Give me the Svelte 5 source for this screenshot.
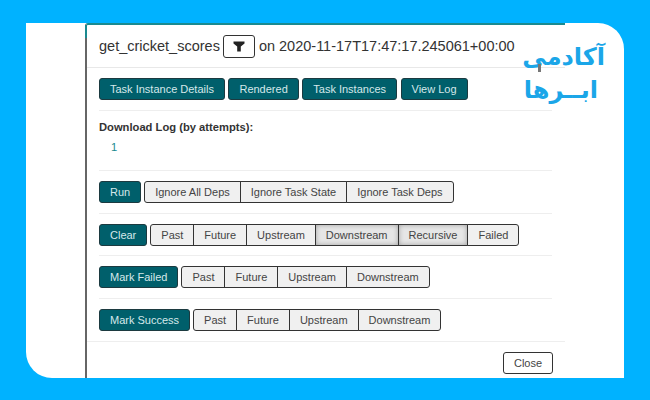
<script>
  const actionRows = [
    { label: 'Run', options: [{ name: 'Ignore All Deps' }, { name: 'Ignore Task State' }, { name: 'Ignore Task Deps' }] },
    {
      label: 'Clear',
      options: [
        { name: 'Past' },
        { name: 'Future' },
        { name: 'Upstream' },
        { name: 'Downstream', active: true },
        { name: 'Recursive', active: true },
        { name: 'Failed' }
      ]
    },
    { label: 'Mark Failed', options: [{ name: 'Past' }, { name: 'Future' }, { name: 'Upstream' }, { name: 'Downstream' }] },
    { label: 'Mark Success', options: [{ name: 'Past' }, { name: 'Future' }, { name: 'Upstream' }, { name: 'Downstream' }] }
  ];
  const tabs = ['Task Instance Details', 'Rendered', 'Task Instances', 'View Log'];
</script>

<div class="page">
  <div class="card">
    <div class="modal">
      <div class="modal-header">
        <span>get_cricket_scores</span>
        <button class="filter-btn" aria-label="Filter">
          <svg width="12" height="11" viewBox="0 0 12 11"><path d="M0.5 0.5h11v2L7.8 5.6V10.5H4.2V5.6L0.5 2.5z" fill="#222" /></svg>
        </button>
        <span>on 2020-11-17T17:47:17.245061+00:00</span>
      </div>

      <div class="modal-body">
        <div class="section tabs">
          {#each tabs as tab}
            <button class="btn primary">{tab}</button>
          {/each}
        </div>

        <div class="section log">
          <h5>Download Log (by attempts):</h5>
          <a href="#log">1</a>
        </div>

        {#each actionRows as row, i}
          <div class="section action" class:last={i === actionRows.length - 1}>
            <button class="btn primary">{row.label}</button>
            <div class="btn-group">
              {#each row.options as option}
                <button class="btn option" class:active={option.active}>{option.name}</button>
              {/each}
            </div>
          </div>
        {/each}
      </div>

      <div class="modal-footer">
        <button class="btn close">Close</button>
      </div>
    </div>

    <div class="logo" dir="rtl">
      <span>آکادمی</span>
      <span class="second">ابــرها</span>
    </div>
    <span class="logo-tick"></span>
  </div>
</div>

<style>
  :global(body) {
    margin: 0;
  }

  .page {
    width: 650px;
    height: 400px;
    box-sizing: border-box;
    padding: 23px 26px 22px;
    background: #00b2ff;
    font-family: "Liberation Sans", Arial, sans-serif;
    overflow: hidden;
  }

  .card {
    position: relative;
    height: 355px;
    background: #fff;
    border-radius: 0 26px 0 26px;
    padding-left: 59px;
  }

  .modal {
    position: relative;
    width: 480px;
    height: 355px;
    box-sizing: border-box;
    border-top: 2px solid #1a8a90;
    border-left: 2px solid #666;
    border-top-left-radius: 3px;
  }

  .modal::before {
    content: "";
    position: absolute;
    left: -2px;
    top: 0;
    width: 2px;
    height: 13px;
    background: #1a8a90;
  }

  .modal-header {
    display: flex;
    align-items: center;
    gap: 3.5px;
    height: 42px;
    padding-left: 12px;
    border-bottom: 1px solid #e8e8e8;
    font-size: 14.5px;
    color: #333;
  }

  .filter-btn {
    display: flex;
    align-items: center;
    justify-content: center;
    width: 32px;
    height: 23px;
    padding: 0;
    background: #fff;
    border: 1px solid #333;
    border-radius: 3px;
  }

  .modal-body {
    padding: 0 13px 0 12px;
  }

  .section {
    border-bottom: 1px solid #eee;
  }

  .tabs {
    display: flex;
    gap: 3.5px;
    padding: 10px 0;
  }

  .log {
    height: 60px;
    box-sizing: border-box;
    padding-top: 10px;
    color: #333;
  }

  .log h5 {
    margin: 0;
    font-size: 11.2px;
    line-height: 13px;
    font-weight: 700;
  }

  .log a {
    display: block;
    margin: 7px 0 0 12px;
    font-size: 11.2px;
    color: #1a8a90;
    text-decoration: none;
  }

  .action {
    display: flex;
    gap: 3px;
    padding: 10px 0 9.7px;
  }

  .action.last {
    border-bottom: none;
  }

  .btn {
    height: 22px;
    box-sizing: border-box;
    padding: 0 10px;
    font-family: inherit;
    font-size: 11px;
    border-radius: 3px;
    white-space: nowrap;
  }

  .primary {
    background: #005f6b;
    border: 1px solid #1c3a40;
    color: #d5e8ea;
  }

  .btn-group {
    display: flex;
  }

  .option {
    margin-left: -1px;
    background: #f0f0f0;
    border: 1px solid #333;
    border-radius: 0;
    color: #444;
  }

  .option:first-child {
    margin-left: 0;
    border-radius: 3px 0 0 3px;
  }

  .option:last-child {
    border-radius: 0 3px 3px 0;
  }

  .option.active {
    background: #e6e6e6;
    box-shadow: inset 0 0 5px rgba(0, 0, 0, 0.3);
  }

  .modal-footer {
    display: flex;
    justify-content: flex-end;
    padding: 10px 12px 0 0;
    border-top: 1px solid #eee;
  }

  .close {
    width: 50px;
    padding: 0;
    background: #fff;
    border: 1px solid #333;
    color: #444;
  }

  .logo {
    position: absolute;
    top: 18px;
    left: 496px;
    width: 83px;
    display: flex;
    flex-direction: column;
    align-items: flex-start;
    font-family: "DejaVu Sans", sans-serif;
    font-size: 24px;
    font-weight: 700;
    line-height: 33px;
    color: #1ba6e8;
  }

  .second {
    margin-right: 7px;
  }

  .logo-tick {
    position: absolute;
    left: 512px;
    top: 41px;
    width: 3px;
    height: 8px;
    background: #777;
  }
</style>
